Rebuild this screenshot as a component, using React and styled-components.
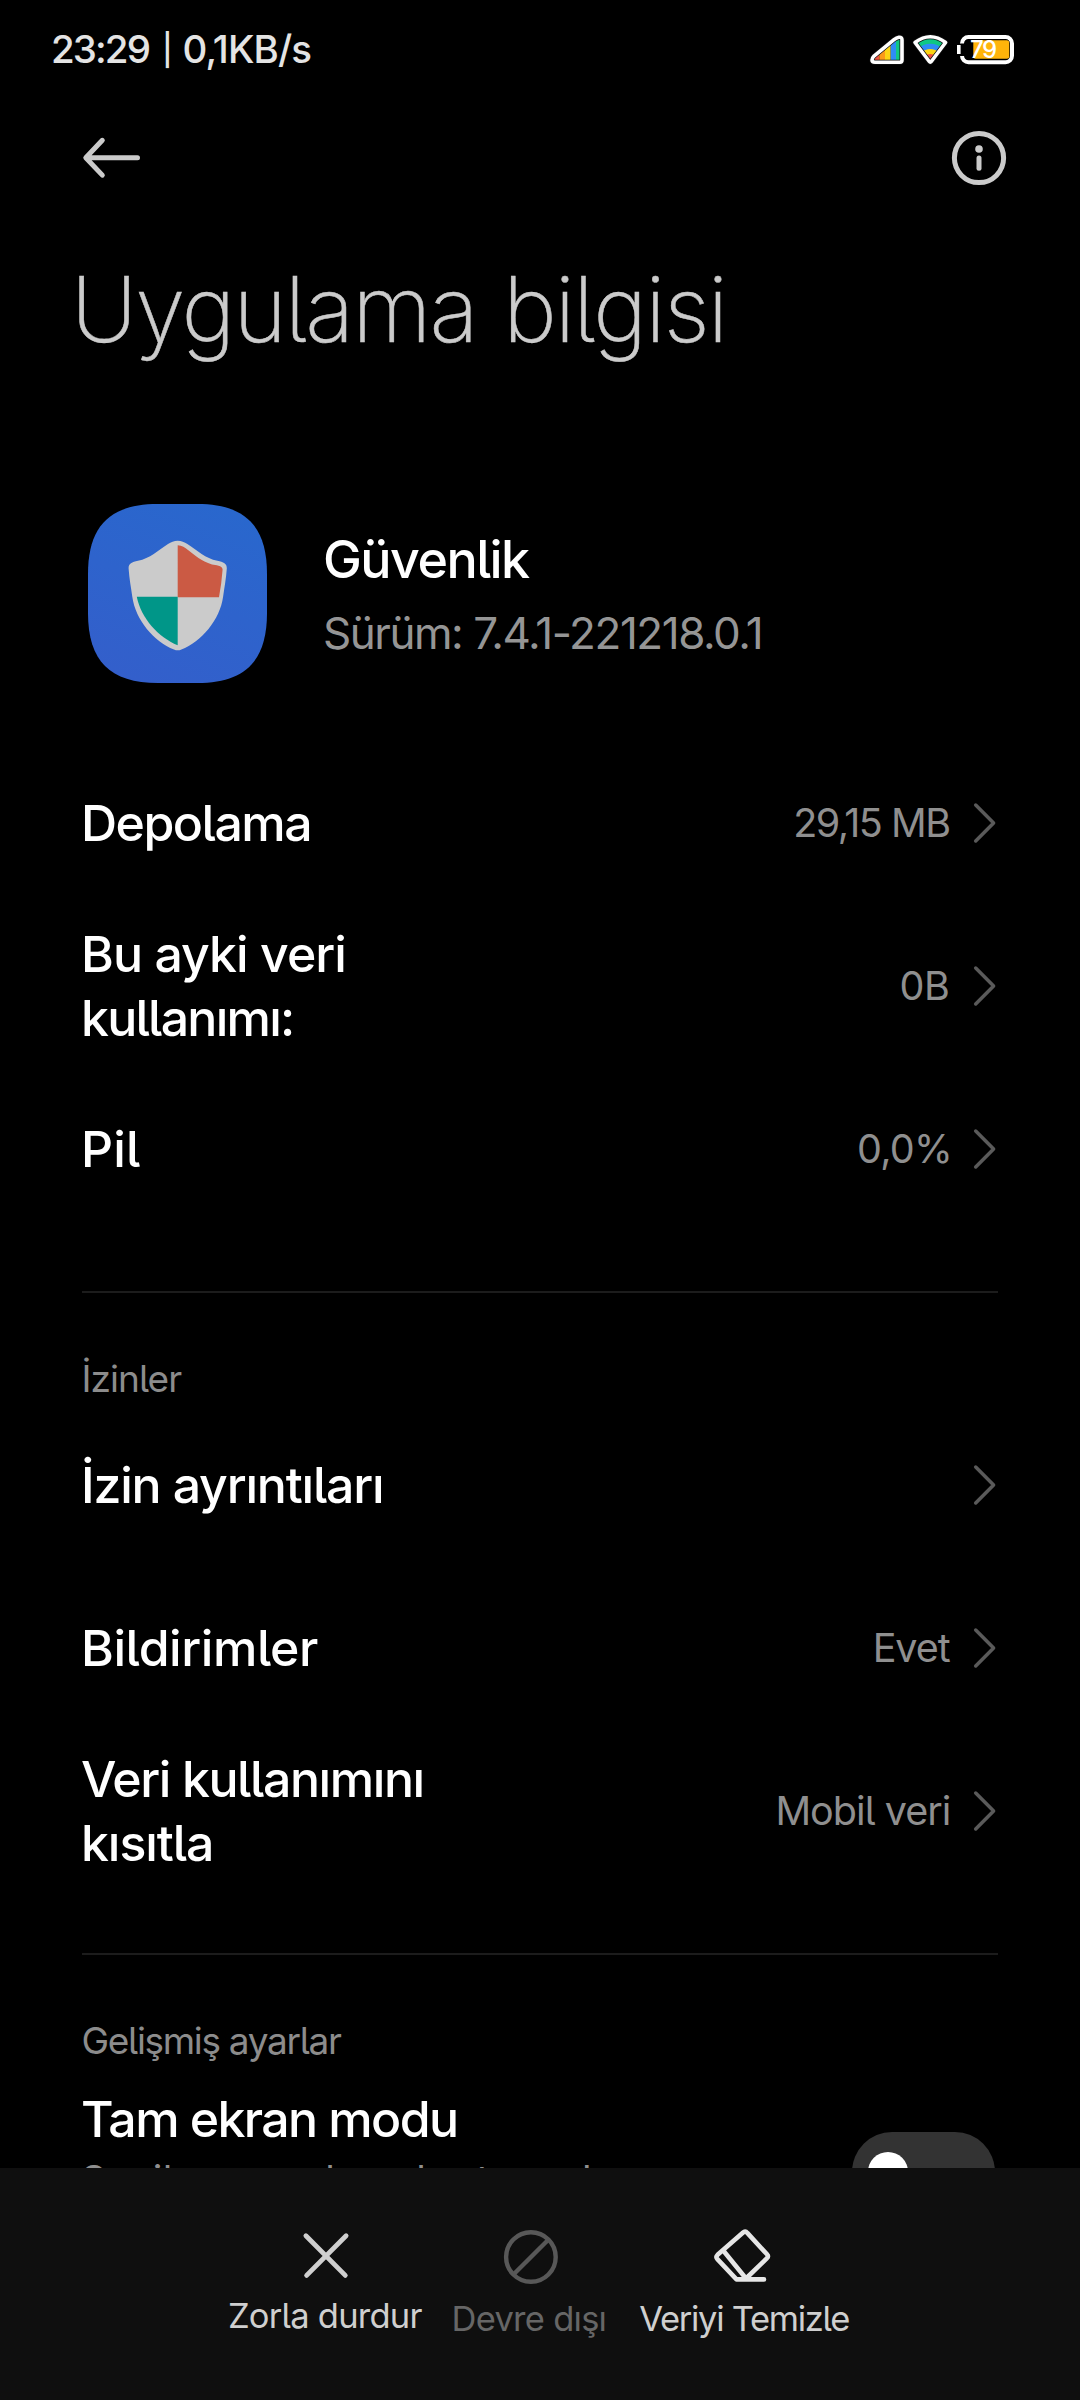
import React from 'react';
import styled, { createGlobalStyle } from 'styled-components';

const GlobalStyle = createGlobalStyle`
  * {
    box-sizing: border-box;
  }
  body {
    margin: 0;
    background: #000;
    font-family: Inter, 'Noto Sans', sans-serif;
    font-feature-settings: 'cv05';
  }
`;

// style
const Screen = styled.div`
  display: flex;
  flex-direction: column;
  width: 1080px;
  height: 2400px;
  overflow: hidden;
  background: #000;
`;
const StatusBar = styled.div`
  display: flex;
  flex: none;
  align-items: center;
  justify-content: space-between;
  height: 98px;
  padding: 0 65px 0 51px;
`;
const StatusText = styled.div`
  display: flex;
  align-items: center;
  font-size: 38.5px;
  font-weight: 500;
  color: #e4e4e4;
`;
const Clock = styled.span`
  letter-spacing: -1.9px;
`;
const Pipe = styled.span`
  width: 33.5px;
  padding-left: 3px;
  font-size: 31px;
  text-align: center;
`;
const NetSpeed = styled.span`
  letter-spacing: -0.89px;
`;
const StatusIcons = styled.div`
  display: flex;
  align-items: center;
  gap: 7px;
`;
const Toolbar = styled.div`
  display: flex;
  flex: none;
  align-items: center;
  justify-content: space-between;
  height: 120px;
  padding: 0 73px 0 82px;
`;
const IconSvg = styled.svg`
  display: block;
  flex: none;
  overflow: visible;
  fill: none;
`;
const Title = styled.h1`
  flex: none;
  height: 182px;
  margin: 0;
  padding-left: 71px;
  font-size: 91px;
  font-weight: 200;
  line-height: 183px;
  letter-spacing: -1.95px;
  word-spacing: 3px;
  color: #cbcbcb;
  -webkit-text-stroke: 0.5px #cbcbcb;
`;
const Content = styled.div`
  flex: 1;
  min-height: 0;
  overflow: hidden;
`;
const AppHeader = styled.div`
  display: flex;
  align-items: center;
  gap: 56px;
  height: 341px;
  padding: 104px 0 58px 88px;
`;
const AppTexts = styled.div`
  padding-top: 6px;
`;
const AppName = styled.div`
  font-size: 52px;
  font-weight: 500;
  line-height: 72.5px;
  letter-spacing: -1.55px;
  color: #fff;
`;
const AppVersion = styled.div`
  font-size: 44px;
  line-height: 72.5px;
  letter-spacing: -1.45px;
  color: #959595;
`;
const Row = styled.div`
  display: flex;
  align-items: center;
  height: 163px;
  padding: 0 82px 0 81px;
`;
const Label = styled.div`
  flex: 1;
  font-size: 50px;
  font-weight: 500;
  line-height: 64px;
  color: #fff;
`;
const LabelLine = styled.div`
  letter-spacing: ${props => props.$tracking}px;
  white-space: nowrap;
`;
const Value = styled.div`
  margin-right: ${props => props.$after || 22.5}px;
  font-size: 39.5px;
  letter-spacing: ${props => props.$tracking}px;
  color: #8f8f8f;
`;
const Divider = styled.div`
  height: 2px;
  margin: 61px 82px 0;
  background: #1c1c1c;
`;
const SectionTitle = styled.div`
  height: 110px;
  padding: 61px 0 0 81.5px;
  font-size: 37px;
  line-height: 49px;
  letter-spacing: ${props => props.$tracking}px;
  color: #8c8c8c;
`;
const SwitchRow = styled.div`
  display: flex;
  align-items: flex-start;
  justify-content: space-between;
  padding: 21.5px 85px 0 81px;
`;
const Summary = styled.div`
  width: 680px;
  margin-top: 3px;
  font-size: 39.5px;
  line-height: 53px;
  letter-spacing: 0.3px;
  color: #8f8f8f;
`;
const SwitchTrack = styled.div`
  display: flex;
  align-items: center;
  width: 143px;
  height: 80px;
  margin-top: 45px;
  padding-left: 16px;
  border-radius: 40px;
  background: #333;
`;
const SwitchKnob = styled.div`
  width: 40px;
  height: 40px;
  border-radius: 50%;
  background: #fff;
`;
const ActionBar = styled.div`
  display: flex;
  flex: none;
  justify-content: center;
  gap: 30px;
  height: 232px;
  padding: 61px 3px 0 0;
  background: #0f0f0f;
`;
const Action = styled.div`
  display: flex;
  flex-direction: column;
  align-items: center;
  gap: 13px;
  margin-right: ${props => props.$after || 0}px;
  color: ${props => (props.$disabled ? '#666' : '#cfcfcf')};
`;
const ActionLabel = styled.div`
  font-size: 34.5px;
  line-height: 42px;
  letter-spacing: ${props => props.$tracking}px;
  white-space: nowrap;
`;

const SIGNAL_SHAPE =
  'M6 29.2H31Q33 29.2 33 27V7Q33 4 30 4.2Q27.5 4.6 25 6.7L5 23Q3 25 3 27Q3 29.2 6 29.2Z';
const WIFI_SHAPE = 'M3 9.5Q18.3 -2 33.6 9.5L19.3 28.5Q18.3 29.8 17.3 28.5Z';

const SignalIcon = () => (
  <IconSvg width="36" height="32" viewBox="0 0 36 32">
    <clipPath id="signal">
      <path d={SIGNAL_SHAPE} />
    </clipPath>
    <g clipPath="url(#signal)">
      <path d="M0 0H10.3V32H0Z" fill="#f0533f" />
      <path d="M10.3 0H16V32H10.3Z" fill="#fb9a1a" />
      <path d="M16 0H21.7V32H16Z" fill="#fcd514" />
      <path d="M21.7 0H27V32H21.7Z" fill="#2f8cf5" />
      <path d="M27 0H36V32H27Z" fill="#10c784" />
    </g>
    <path d={SIGNAL_SHAPE} stroke="#111" strokeWidth="5" />
    <path d={SIGNAL_SHAPE} stroke="#fff" strokeWidth="3.6" />
  </IconSvg>
);

const WifiIcon = () => (
  <IconSvg width="37" height="32" viewBox="0 0 37 32">
    <clipPath id="wifi">
      <path d={WIFI_SHAPE} />
    </clipPath>
    <g clipPath="url(#wifi)">
      <path d="M0 0H37V32H0Z" fill="#10c784" />
      <circle cx="18.3" cy="28.5" r="17.8" fill="#2f8cf5" />
      <circle cx="18.3" cy="28.5" r="12.6" fill="#fcd514" />
      <circle cx="18.3" cy="28.5" r="7.6" fill="#f0533f" />
    </g>
    <path d={WIFI_SHAPE} stroke="#111" strokeWidth="5" strokeLinejoin="round" />
    <path d={WIFI_SHAPE} stroke="#fff" strokeWidth="3.6" strokeLinejoin="round" />
  </IconSvg>
);

const BatteryIcon = () => (
  <IconSvg width="59" height="32" viewBox="0 0 59 32">
    <rect x="6" y="4" width="50" height="25.3" rx="6.5" stroke="#fff" strokeWidth="4" />
    <path d="M3 10.5H9V23H3Z" fill="#000" />
    <path d="M1 12H4.6V21H1Z" fill="#fff" />
    <rect x="17.3" y="7.2" width="36" height="18.6" rx="2.5" fill="#ffb40a" />
    <text x="14" y="24.8" fontSize="24" fontWeight="500" letterSpacing="-1.5" fill="#fff">
      79
    </text>
  </IconSvg>
);

const BackIcon = () => (
  <IconSvg width="60" height="44" viewBox="0 0 60 44" stroke="#cbcbcb" strokeWidth="5">
    <path d="M20.3 4.3L3.8 21.7L20.3 39.1M4.5 21.7H55.5" strokeLinecap="round" strokeLinejoin="round" />
  </IconSvg>
);

const InfoIcon = () => (
  <IconSvg width="56" height="56" viewBox="0 0 56 56">
    <circle cx="28" cy="28" r="24.6" stroke="#cbcbcb" strokeWidth="5" />
    <circle cx="28" cy="19" r="3.8" fill="#cbcbcb" />
    <path d="M28 28V38.3" stroke="#cbcbcb" strokeWidth="5" strokeLinecap="round" />
  </IconSvg>
);

const ShieldIcon = () => (
  <IconSvg width="179" height="179" viewBox="0 0 179 179">
    <defs>
      <linearGradient id="tile" x1="0.7" y1="0" x2="0.3" y2="1">
        <stop offset="0" stopColor="#2967cd" />
        <stop offset="1" stopColor="#335fcb" />
      </linearGradient>
    </defs>
    <path
      d="M0 70C0 22 22 0 70 0H109C157 0 179 22 179 70V109C179 157 157 179 109 179H70C22 179 0 157 0 109Z"
      fill="url(#tile)"
    />
    <path
      d="M89.7 36.7C86 36.7 83 38 80 40C70 46.5 62 54.5 50 56.8C44 58 40.3 59.5 40.6 64.5C41.3 75 43 83 44.3 92.7C47.5 116 66 137.5 86 145.5Q89.7 147.2 93.4 145.5C113.4 137.5 131.9 116 135.1 92.7C136.4 83 138.1 75 138.8 64.5C139.1 59.5 135.4 58 129.4 56.8C117.4 54.5 109.4 46.5 99.4 40C96.4 38 93.4 36.7 89.7 36.7Z"
      fill="#cbcbcb"
    />
    <path
      d="M89.7 41.3C94 41.5 97 43.8 100 46C107 51.5 113 57 124 60.5Q135 61.5 134.6 65.5Q133.5 80 131 93.2H89.7Z"
      fill="#cb5a44"
    />
    <path d="M48.8 92.7H89.7V141.3C70 133 53 114 48.8 92.7Z" fill="#009688" />
  </IconSvg>
);

const Chevron = () => (
  <IconSvg width="26" height="44" viewBox="0 0 26 44" stroke="#5a5a5a" strokeWidth="3.5">
    <path d="M3.7 4L21.6 22L3.7 40" strokeLinecap="round" strokeLinejoin="round" />
  </IconSvg>
);

const StopIcon = () => (
  <IconSvg width="56" height="53" viewBox="0 0 56 53" stroke="#cfcfcf" strokeWidth="4.8">
    <path d="M8.9 6.8L48.3 46.4M49.1 6.8L9.6 46.4" strokeLinecap="round" />
  </IconSvg>
);

const DisableIcon = () => (
  <IconSvg width="56" height="56" viewBox="0 0 56 56" stroke="#585858" strokeWidth="4.4">
    <circle cx="29.9" cy="28" r="24.8" />
    <path d="M12.7 45.3L47.3 10.7" />
  </IconSvg>
);

const EraserIcon = () => (
  <IconSvg width="56" height="56" viewBox="0 0 56 56" stroke="#e6e6e6" strokeWidth="4.6">
    <path
      d="M48 50.4H20.5L1.4 30.2Q-0.6 28 1.6 25.8L26.8 3.7Q29.2 1.5 31.3 3.9L51 25.3Q52.9 27.4 50.8 29.4L30 49.5L7.6 22"
      strokeLinecap="round"
      strokeLinejoin="round"
    />
  </IconSvg>
);

// data
const usage = [
  { lines: [['Depolama', -1.5]], value: '29,15 MB', tracking: -1.5 },
  { lines: [['Bu ayki veri', -0.95], ['kullanımı:', -1.75]], value: '0B', tracking: -0.42 },
  { lines: [['Pil', 0.2]], value: '0,0%', tracking: -0.74, after: 20 },
];
const permissions = [
  { lines: [['İzin ayrıntıları', -1.19]] },
  { lines: [['Bildirimler', -0.43]], value: 'Evet', tracking: -1.07 },
  {
    lines: [['Veri kullanımını', -1.42], ['kısıtla', -1.08]],
    value: 'Mobil veri',
    tracking: -0.95,
    after: 21.5,
  },
];

const SettingRow = props => (
  <Row>
    <Label>
      {props.lines.map(([text, tracking]) => (
        <LabelLine key={text} $tracking={tracking}>{text}</LabelLine>
      ))}
    </Label>
    {props.value && (
      <Value $tracking={props.tracking} $after={props.after}>{props.value}</Value>
    )}
    <Chevron />
  </Row>
);

const App = () => {
  return (
    <Screen>
      <GlobalStyle />
      <StatusBar>
        <StatusText>
          <Clock>23:29</Clock>
          <Pipe>|</Pipe>
          <NetSpeed>0,1KB/s</NetSpeed>
        </StatusText>
        <StatusIcons>
          <SignalIcon />
          <WifiIcon />
          <BatteryIcon />
        </StatusIcons>
      </StatusBar>
      <Toolbar>
        <BackIcon />
        <InfoIcon />
      </Toolbar>
      <Title>Uygulama bilgisi</Title>
      <Content>
        <AppHeader>
          <ShieldIcon />
          <AppTexts>
            <AppName>Güvenlik</AppName>
            <AppVersion>Sürüm: 7.4.1-221218.0.1</AppVersion>
          </AppTexts>
        </AppHeader>
        {usage.map((item, index) => (
          <SettingRow key={index} {...item} />
        ))}
        <Divider />
        <SectionTitle $tracking={-0.95}>İzinler</SectionTitle>
        {permissions.map((item, index) => (
          <SettingRow key={index} {...item} />
        ))}
        <Divider />
        <SectionTitle $tracking={-1.32}>Gelişmiş ayarlar</SectionTitle>
        <SwitchRow>
          <div>
            <Label>
              <LabelLine $tracking={-1.61}>Tam ekran modu</LabelLine>
            </Label>
            <Summary>Seçilen uygulamalar tam ekran</Summary>
          </div>
          <SwitchTrack>
            <SwitchKnob />
          </SwitchTrack>
        </SwitchRow>
      </Content>
      <ActionBar>
        <Action>
          <StopIcon />
          <ActionLabel $tracking={-0.77}>Zorla durdur</ActionLabel>
        </Action>
        <Action $disabled $after={3}>
          <DisableIcon />
          <ActionLabel $tracking={-0.74}>Devre dışı</ActionLabel>
        </Action>
        <Action>
          <EraserIcon />
          <ActionLabel $tracking={-1.29}>Veriyi Temizle</ActionLabel>
        </Action>
      </ActionBar>
    </Screen>
  );
};

export default App;
